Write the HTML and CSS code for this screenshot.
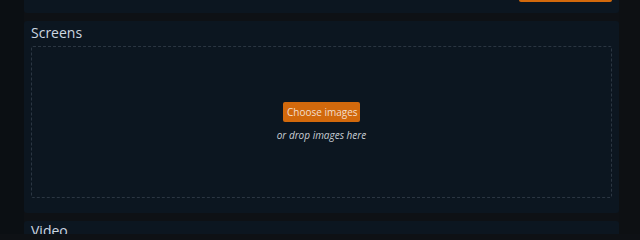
FILE: index.html
```html
<!DOCTYPE html>
<html lang="en">
<head>
<meta charset="utf-8">
<title>Screens</title>
<link rel="stylesheet" href="styles.css">
</head>
<body>
<div class="layout">
  <aside class="sidebar"></aside>
  <main class="main">
    <section class="card card-top">
      <div class="actions">
        <button class="btn btn-wide" type="button" aria-label="Save"></button>
      </div>
    </section>
    <section class="card">
      <h2 class="card-title">Screens</h2>
      <div class="dropzone">
        <button class="btn btn-choose" type="button">Choose images</button>
        <p class="drop-hint">or drop images here</p>
      </div>
    </section>
    <section class="card card-next">
      <h2 class="card-title">Video</h2>
    </section>
  </main>
  <div class="gutter"></div>
</div>
</body>
</html>
```

FILE: styles.css
```css
* { box-sizing: border-box; }
html, body { margin: 0; padding: 0; }
body {
  background: #0e1115;
  font-family: "Open Sans", "Noto Sans", sans-serif;
  color: #c9d3dd;
  height: 234px;
  overflow: hidden;
}
.layout {
  display: flex;
  height: 234px;
  overflow: hidden;
}
.sidebar {
  width: 24px;
  flex: none;
  background: #0b0f13;
}
.main {
  width: 595px;
  flex: none;
  display: flex;
  flex-direction: column;
  gap: 8px;
}
.gutter {
  flex: 1;
  background: #0d1013;
}
.card {
  background: #0c1620;
  border-radius: 3px;
  padding: 3px 7px 15px;
}
.card-top {
  margin-top: -26px;
  padding: 8px 7px 11px;
}
.actions {
  display: flex;
  justify-content: flex-end;
}
.btn {
  height: 20px;
  padding: 0 4px;
  border: 0;
  border-radius: 2px;
  background: #d2690c;
  color: #f2dfcc;
  font-family: "Open Sans", "Noto Sans", sans-serif;
  font-size: 10px;
  line-height: 20px;
  white-space: nowrap;
}
.btn-wide { width: 93px; }
.btn-choose { width: 77px; }
.card-title {
  margin: 0 0 4px;
  font-size: 14px;
  font-weight: 400;
  line-height: 18px;
  color: #cdd6e0;
}
.dropzone {
  height: 152px;
  border: 1px dashed #2b3642;
  border-radius: 2px;
  display: flex;
  flex-direction: column;
  align-items: center;
  justify-content: center;
}
.drop-hint {
  margin: 7px 0 0;
  font-size: 10px;
  font-style: italic;
  line-height: 13px;
  color: #c8ced5;
}
.card-next {
  height: 60px;
  padding-top: 1px;
}
```
